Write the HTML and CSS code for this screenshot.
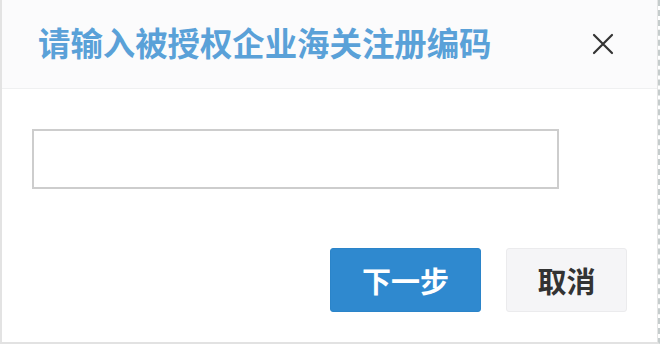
FILE: index.html
```html
<!DOCTYPE html>
<html lang="zh">
<head>
<meta charset="utf-8">
<link rel="stylesheet" href="styles.css">
</head>
<body>
<div class="frame">
  <div class="dialog">
    <div class="header">
      <div class="title">请输入被授权企业海关注册编码</div>
      <button class="close" aria-label="关闭">
        <svg width="22" height="22" viewBox="0 0 22 22"><path d="M2 2 L20 20 M20 2 L2 20" stroke="#333" stroke-width="2.2" stroke-linecap="round" fill="none"/></svg>
      </button>
    </div>
    <div class="body">
      <input class="code-input" type="text">
    </div>
    <div class="footer">
      <button class="btn btn-primary">下一步</button>
      <button class="btn btn-default">取消</button>
    </div>
  </div>
</div>
</body>
</html>
```

FILE: styles.css
```css
html, body {
  margin: 0;
  padding: 0;
  background: #ffffff;
  font-family: "Noto Sans CJK SC", "Noto Sans", sans-serif;
}
.frame {
  width: 660px;
  height: 344px;
  box-sizing: border-box;
  border-right: 2px dashed #c5cccc;
  border-bottom: 2px solid #e2e2e2;
}
.dialog {
  height: 100%;
  box-sizing: border-box;
  border-left: 2px solid #e3e3e3;
  border-right: 1px solid #e6e6e6;
  display: flex;
  flex-direction: column;
}
.header {
  height: 88px;
  flex: none;
  background: #fbfbfc;
  border-bottom: 1px solid #eff0f1;
  display: flex;
  align-items: center;
  justify-content: space-between;
  padding: 0 43px 0 36px;
}
.title {
  color: #5aa1d8;
  font-size: 32.4px;
  font-weight: 700;
  line-height: 1;
  margin-top: -4px;
}
.close {
  border: 0;
  background: transparent;
  padding: 0;
  width: 22px;
  height: 22px;
  display: flex;
}
.body {
  padding: 40px 0 0 30px;
}
.code-input {
  display: block;
  width: 527px;
  height: 60px;
  box-sizing: border-box;
  border: 2px solid #cdcdcd;
  background: #fff;
  margin: 0;
  outline: none;
}
.footer {
  margin-top: 59px;
  display: flex;
  justify-content: flex-end;
  gap: 25px;
  padding-right: 30px;
}
.btn {
  height: 64px;
  box-sizing: border-box;
  border-radius: 3px;
  font-family: "Noto Sans CJK SC", sans-serif;
  font-size: 29px;
  font-weight: 700;
  line-height: 1;
  padding: 0;
}
.btn-primary {
  width: 151px;
  background: #2f89cf;
  border: 1px solid #2b84c9;
  color: #ffffff;
}
.btn-default {
  width: 121px;
  background: #f5f5f7;
  border: 1px solid #ebebed;
  color: #333333;
}
```
